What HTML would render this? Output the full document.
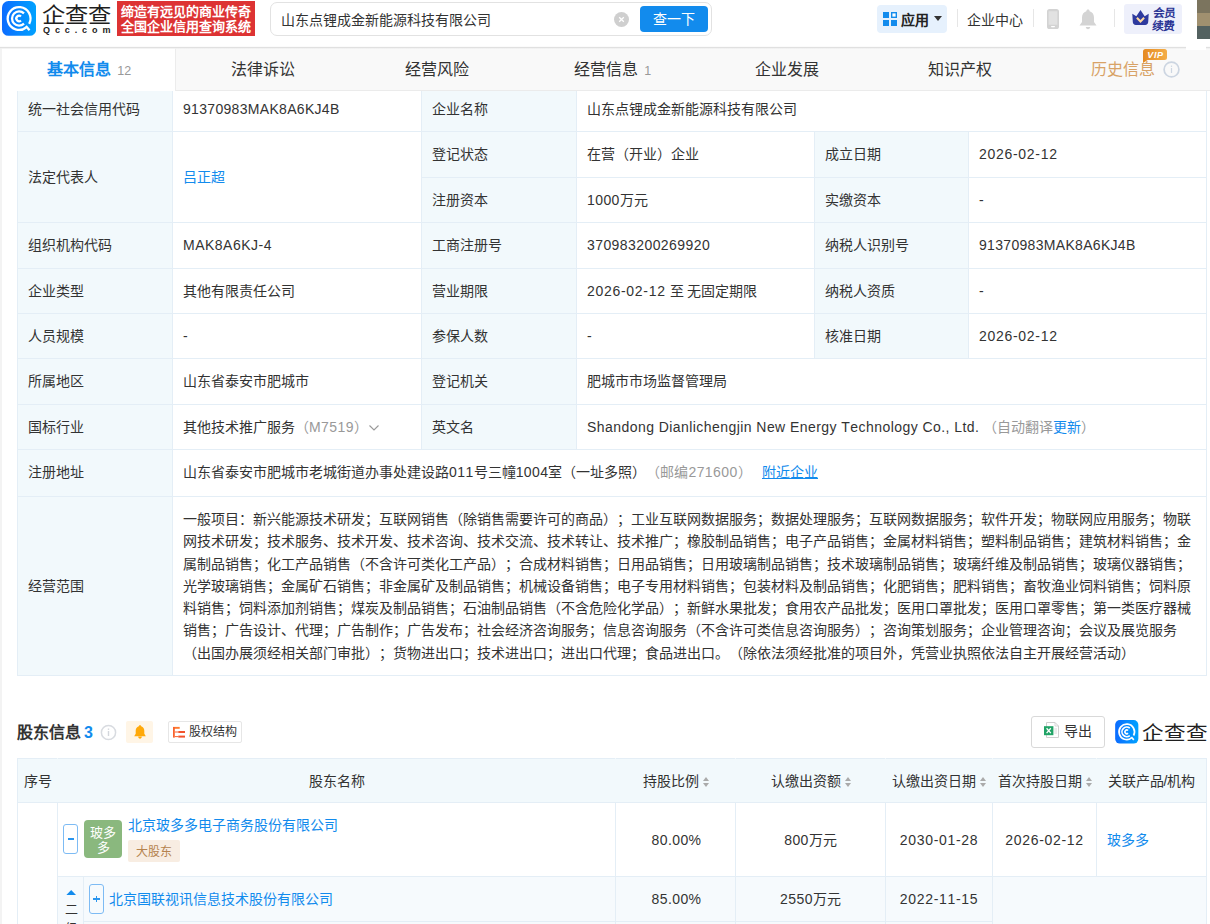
<!DOCTYPE html>
<html lang="zh-CN">
<head>
<meta charset="utf-8">
<title>企查查</title>
<style>
*{box-sizing:border-box;}
html,body{margin:0;padding:0;overflow:hidden;}
body{width:1210px;height:924px;overflow:hidden;position:relative;background:#fff;font-family:"Liberation Sans",sans-serif;font-size:14px;color:#333;text-spacing-trim:space-all;font-kerning:none;}
a{color:#128bed;text-decoration:none;}
.abs{position:absolute;}
/* header */
#hdr{position:absolute;left:0;top:0;width:1210px;height:47px;background:#fff;z-index:30;}
#hdrline{position:absolute;left:0;top:46px;width:1210px;height:3px;background:linear-gradient(#fbfbfb 0,#fbfbfb 33%,#e0e0e0 33%,#e0e0e0 67%,rgba(240,240,240,.8) 67%);z-index:31;}
#logoicon{position:absolute;left:2px;top:1px;width:34.2px;height:34.8px;}
#logotxt{position:absolute;left:42px;top:0px;transform:scaleY(.9);transform-origin:0 24px;font-size:23.3px;line-height:28px;color:#1f1f1f;font-weight:500;letter-spacing:0px;white-space:nowrap;}
#logosub{position:absolute;left:43px;top:24px;font-size:9px;line-height:12px;font-weight:bold;color:#222;letter-spacing:4.9px;white-space:nowrap;}
#slogan{position:absolute;left:117px;top:1px;width:138px;height:35px;background:#dd3333;color:#fff;font-weight:bold;font-size:13px;line-height:15px;padding:3px 0 0 3.7px;white-space:nowrap;letter-spacing:0;}
#search{position:absolute;left:270px;top:2px;width:442px;height:34px;border:1px solid #e2e2e2;border-radius:7px;background:#fff;}
#search .q{position:absolute;left:10px;top:0;line-height:34px;font-size:14px;color:#333;white-space:nowrap;}
#search .clr{position:absolute;left:343px;top:9px;width:15px;height:15px;border-radius:50%;background:#cfcfcf;}
#search .btn{position:absolute;left:369px;top:3px;width:68px;height:26px;border-radius:4px;background:#128bed;color:#fff;font-size:14px;line-height:26px;text-align:center;font-weight:500;}
#app{position:absolute;left:877px;top:5px;width:70px;height:28px;border-radius:4px;background:#e6f1fd;}
#app b{position:absolute;left:24px;top:1px;line-height:28px;font-size:14px;color:#222;}
.vdiv{position:absolute;top:9px;width:1px;height:18px;background:#e6e6e6;}
#ec{position:absolute;left:967px;top:6px;line-height:28px;font-size:14px;color:#333;white-space:nowrap;}
#vip{position:absolute;left:1124px;top:4px;width:58px;height:30px;border-radius:3px;background:#eef0fb;}
#vip .t{position:absolute;left:29px;top:2.5px;font-size:11.5px;line-height:12.5px;font-weight:bold;font-style:normal;transform:skewX(-4deg);color:#2b3595;white-space:nowrap;}
#avatar{position:absolute;left:1197px;top:0;width:13px;height:39px;background:linear-gradient(#7b745e 0,#7b745e 13px,#a0906f 13px,#a0906f 26px,#536160 26px,#536160 39px);}
/* tabs */
#tabs{position:absolute;left:0;top:48px;width:1210px;height:43px;background:#f9f9f9;border-bottom:1px solid #ebebeb;z-index:20;}
#tabs .tab{position:absolute;top:0;height:43px;width:174.4px;text-align:center;font-size:16px;line-height:44px;color:#333;white-space:nowrap;}
#tabs .tab small{font-size:12.5px;color:#999;margin-left:2px;}
#tabs .act{background:#fff;color:#128bed;font-weight:bold;height:43px;left:2px;width:174px;padding-left:1px;border-right:1px solid #ececec;}
#tabs .act small{font-weight:normal;}
#tabs .his{color:#d8a266;}
#lstrip{position:absolute;left:0;top:48px;width:2px;height:876px;background:#f3f3f3;z-index:25;}
</style>
</head>
<body>
<div id="hdr">
  <svg id="logoicon" viewBox="0 0 34.2 34.8">
    <defs><linearGradient id="lg" x1="0" y1="0.5" x2="1" y2="0.5"><stop offset="0" stop-color="#0c6cff"/><stop offset="1" stop-color="#00a2ff"/></linearGradient></defs>
    <rect x="0" y="0" width="34.2" height="34.8" rx="6.5" fill="url(#lg)"/>
    <g fill="none" stroke="#fff" stroke-width="2.3">
    <path d="M24.12 26.48 A11.4 11.4 0 1 1 27.17 22.85"/>
    <path d="M22.0 22.57 A7.05 7.05 0 1 1 22.0 12.43"/>
    <path d="M18.98 19.51 A2.75 2.75 0 1 1 18.98 15.49"/>
    <path d="M23.9 25.0 L27.5 29.3"/>
    </g>
  </svg>
  <div id="logotxt">企查查</div>
  <div id="logosub">Qcc.com</div>
  <div id="slogan">缔造有远见的商业传奇<br>全国企业信用查询系统</div>
  <div id="search">
    <div class="q">山东点锂成金新能源科技有限公司</div>
    <div class="clr"><svg width="15" height="15" viewBox="0 0 15 15"><path d="M5.2 5.2 L9.8 9.8 M9.8 5.2 L5.2 9.8" stroke="#fff" stroke-width="1.3"/></svg></div>
    <div class="btn">查一下</div>
  </div>
  <div id="app">
    <svg class="abs" style="left:6px;top:7px" width="14" height="14" viewBox="0 0 14 14"><rect x="0" y="0" width="6" height="6" fill="#128bed"/><rect x="8.7" y="0.7" width="4.6" height="4.6" fill="#fff" stroke="#128bed" stroke-width="1.4"/><rect x="0" y="8" width="6" height="6" fill="#128bed"/><rect x="8" y="8" width="6" height="6" fill="#128bed"/></svg>
    <b>应用</b>
    <svg class="abs" style="left:57px;top:11px" width="8" height="5" viewBox="0 0 8 5"><path d="M0 0 L8 0 L4 5 Z" fill="#333"/></svg>
  </div>
  <div class="vdiv" style="left:957px"></div>
  <div id="ec">企业中心</div>
  <div class="vdiv" style="left:1033px"></div>
  <svg class="abs" style="left:1047px;top:9px" width="12" height="20" viewBox="0 0 12 20"><rect x="0" y="0" width="12" height="20" rx="2.6" fill="#d3d3d3"/><rect x="1.6" y="2.2" width="8.8" height="13.6" rx="0.4" fill="#e2e2e2"/><rect x="4" y="16.9" width="4" height="1.3" rx="0.65" fill="#fff"/></svg>
  <svg class="abs" style="left:1079px;top:9px" width="18" height="21" viewBox="0 0 18 21"><path d="M9 0.5 C10 0.5 10.6 1.2 10.6 2.2 C13.6 3 15 5.6 15 8.6 L15 13 L17.5 16.5 L0.5 16.5 L3 13 L3 8.6 C3 5.6 4.4 3 7.4 2.2 C7.4 1.2 8 0.5 9 0.5 Z" fill="#d4d4d4"/><path d="M6.8 18 L11.2 18 C11.2 19.3 10.2 20.2 9 20.2 C7.8 20.2 6.8 19.3 6.8 18 Z" fill="#d4d4d4"/></svg>
  <div class="vdiv" style="left:1114px"></div>
  <div id="vip">
    <svg class="abs" style="left:8px;top:6px" width="17" height="16" viewBox="0 0 17 16"><path d="M0.3 3.8 L4.3 6.2 L8.5 0 L12.7 6.2 L16.7 3.8 L16.2 12 C16.1 13.8 15 14.9 13.2 14.9 L3.8 14.9 C2 14.9 0.9 13.8 0.8 12 Z" fill="#2e3a9e"/><path d="M4.9 7.7 L8.5 11.5 L12.1 7.7" fill="none" stroke="#ffd9a0" stroke-width="2"/></svg>
    <div class="t">会员<br>续费</div>
  </div>
  <div id="avatar"></div>
</div>
<div id="hdrline"></div>
<div class="abs" style="left:1186px;top:40px;width:20px;height:10px;background:#fff;z-index:32"></div>
<div id="tabs">
  <div class="tab act">基本信息 <small>12</small></div>
  <div class="tab" style="left:176px">法律诉讼</div>
  <div class="tab" style="left:350.3px">经营风险</div>
  <div class="tab" style="left:525.3px">经营信息 <small>1</small></div>
  <div class="tab" style="left:699.5px">企业发展</div>
  <div class="tab" style="left:873.3px">知识产权</div>
  <div class="tab his" style="left:1048px;text-align:left;padding-left:43px">历史信息
    <svg class="abs" style="left:115.3px;top:13.3px" width="17" height="17" viewBox="0 0 17 17"><circle cx="8.5" cy="8.5" r="7.4" fill="none" stroke="#ccd5e1" stroke-width="1.7"/><rect x="7.9" y="7" width="1.2" height="5" fill="#cdd6e2"/><rect x="7.9" y="4.6" width="1.2" height="1.3" fill="#cdd6e2"/></svg>
    <div class="abs" style="left:95px;top:1px;width:24px;height:11px;border-radius:2.5px 2.5px 2.5px 0;background:linear-gradient(90deg,#e58a22,#f4ad48);color:#fff;font-size:9px;line-height:12px;font-weight:bold;font-style:italic;text-align:center;letter-spacing:0.7px;padding-left:1px;">VIP</div><svg class="abs" style="left:95px;top:11.5px" width="5" height="3" viewBox="0 0 5 3"><path d="M0 0 H4.5 L0 3 Z" fill="#e58a22"/></svg>
  </div>
</div>
<div id="lstrip"></div>
<style>
#t1{position:absolute;left:17px;top:86px;width:1189px;border-collapse:collapse;table-layout:fixed;z-index:5;}
#t1 td{border:1px solid #e4eef6;padding:0 10px;font-size:14px;line-height:22px;color:#333;vertical-align:middle;white-space:nowrap;overflow:hidden;}
#t1 td.tb{background:#f2f9fc;}
#t1 tr.s td{vertical-align:top;padding-top:11px;}
#t1 tr.s td.m{vertical-align:middle;padding-top:0;}
.d{letter-spacing:.42px;}
.dt{letter-spacing:.7px;}
.en{letter-spacing:.44px;}
.c1{letter-spacing:.31px;}
.c2{letter-spacing:.5px;}
#t1 .g{color:#999;}
#scope{line-height:22.33px;position:relative;top:0px;}
#sec{position:absolute;left:17px;top:722px;height:22px;z-index:5;}
#sec .h{position:absolute;left:0;top:0;font-size:16px;line-height:22px;font-weight:bold;color:#333;white-space:nowrap;}
#sec .n{position:absolute;left:67px;top:0;font-size:16px;line-height:22px;font-weight:bold;color:#128bed;}
#bellbox{position:absolute;left:126px;top:721px;width:27px;height:22px;border-radius:2px;background:#fff5e6;}
#gqbtn{position:absolute;left:168px;top:721px;width:74px;height:22px;border:1px solid #e6e6e6;border-radius:2px;background:#fff;}
#gqbtn span{position:absolute;left:19.5px;top:0;line-height:20px;font-size:12px;color:#333;white-space:nowrap;}
#expbtn{position:absolute;left:1031px;top:716px;width:74px;height:32px;border:1px solid #d9d9d9;border-radius:3px;background:#fff;}
#expbtn span{position:absolute;left:32px;top:0;line-height:29px;font-size:14px;color:#333;white-space:nowrap;}
#wm{position:absolute;left:1115px;top:719px;width:95px;height:25px;}
#t2{position:absolute;left:17px;top:758px;width:1189px;border-collapse:collapse;table-layout:fixed;z-index:5;}
#t2 td,#t2 th{border:1px solid #e4eef6;padding:0;font-size:14px;line-height:22px;color:#333;vertical-align:middle;text-align:center;font-weight:normal;white-space:nowrap;overflow:hidden;position:relative;}
#t2 th{background:#f2f9fc;border-left-color:#f2f9fc;border-right-color:#f2f9fc;}
#t2 th:first-child{border-left-color:#e4eef6;}
#t2 th:last-child{border-right-color:#e4eef6;}
#t2 tr.sub td{background:#f6fafd;}
.sort{display:inline-block;width:6px;height:10px;margin-left:4px;vertical-align:-1px;}
</style>
<table id="t1">
<colgroup><col style="width:155px"><col style="width:249px"><col style="width:155px"><col style="width:238px"><col style="width:154px"><col style="width:238px"></colgroup>
<tr class="s" style="height:45px"><td class="tb">统一社会信用代码</td><td class="c1">91370983MAK8A6KJ4B</td><td class="tb">企业名称</td><td colspan="3">山东点锂成金新能源科技有限公司</td></tr>
<tr class="s" style="height:46px"><td class="tb m" rowspan="2">法定代表人</td><td class="m" rowspan="2"><a>吕正超</a></td><td class="tb">登记状态</td><td>在营（开业）企业</td><td class="tb">成立日期</td><td class="dt">2026-02-12</td></tr>
<tr class="s" style="height:45px"><td class="tb">注册资本</td><td><span class="d">1000</span>万元</td><td class="tb">实缴资本</td><td>-</td></tr>
<tr class="s" style="height:46px"><td class="tb">组织机构代码</td><td class="c2">MAK8A6KJ-4</td><td class="tb">工商注册号</td><td class="d">370983200269920</td><td class="tb">纳税人识别号</td><td class="c1">91370983MAK8A6KJ4B</td></tr>
<tr class="s" style="height:45px"><td class="tb">企业类型</td><td>其他有限责任公司</td><td class="tb">营业期限</td><td><span class="dt">2026-02-12</span> 至 无固定期限</td><td class="tb">纳税人资质</td><td>-</td></tr>
<tr class="s" style="height:45px"><td class="tb">人员规模</td><td>-</td><td class="tb">参保人数</td><td>-</td><td class="tb">核准日期</td><td class="dt">2026-02-12</td></tr>
<tr class="s" style="height:46px"><td class="tb">所属地区</td><td>山东省泰安市肥城市</td><td class="tb">登记机关</td><td colspan="3">肥城市市场监督管理局</td></tr>
<tr class="s" style="height:45px"><td class="tb">国标行业</td><td>其他技术推广服务<span class="g">（<span class="d">M7519</span>）</span><svg width="10" height="6" viewBox="0 0 10 6" style="margin-left:1px;vertical-align:1px"><path d="M0.5 0.5 L5 5 L9.5 0.5" fill="none" stroke="#999" stroke-width="1.1"/></svg></td><td class="tb">英文名</td><td colspan="3"><span id="en" class="en">Shandong Dianlichengjin New Energy Technology Co., Ltd.</span> <span class="g">（自动翻译<a>更新</a>）</span></td></tr>
<tr class="s" style="height:47px"><td class="tb">注册地址</td><td colspan="5">山东省泰安市肥城市老城街道办事处建设路<span class="d">011</span>号三幢<span class="d">1004</span>室（一址多照）<span class="g">（邮编<span class="d">271600</span>）</span><a style="margin-left:10.3px;text-decoration:underline">附近企业</a></td></tr>
<tr style="height:179px"><td class="tb">经营范围</td><td colspan="5"><div id="scope">一般项目：新兴能源技术研发；互联网销售（除销售需要许可的商品）；工业互联网数据服务；数据处理服务；互联网数据服务；软件开发；物联网应用服务；物联<br>网技术研发；技术服务、技术开发、技术咨询、技术交流、技术转让、技术推广；橡胶制品销售；电子产品销售；金属材料销售；塑料制品销售；建筑材料销售；金<br>属制品销售；化工产品销售（不含许可类化工产品）；合成材料销售；日用品销售；日用玻璃制品销售；技术玻璃制品销售；玻璃纤维及制品销售；玻璃仪器销售；<br>光学玻璃销售；金属矿石销售；非金属矿及制品销售；机械设备销售；电子专用材料销售；包装材料及制品销售；化肥销售；肥料销售；畜牧渔业饲料销售；饲料原<br>料销售；饲料添加剂销售；煤炭及制品销售；石油制品销售（不含危险化学品）；新鲜水果批发；食用农产品批发；医用口罩批发；医用口罩零售；第一类医疗器械<br>销售；广告设计、代理；广告制作；广告发布；社会经济咨询服务；信息咨询服务（不含许可类信息咨询服务）；咨询策划服务；企业管理咨询；会议及展览服务<br>（出国办展须经相关部门审批）；货物进出口；技术进出口；进出口代理；食品进出口。（除依法须经批准的项目外，凭营业执照依法自主开展经营活动）</div></td></tr>
</table>

<div id="sec"><div class="h">股东信息</div><div class="n">3</div></div>
<svg class="abs" style="left:100.4px;top:724.4px;z-index:5" width="17" height="17" viewBox="0 0 17 17"><circle cx="8.5" cy="8.5" r="7.1" fill="none" stroke="#d8dbe0" stroke-width="1.5"/><rect x="7.8" y="7" width="1.4" height="5" fill="#d3d6dc"/><rect x="7.8" y="4.5" width="1.4" height="1.4" fill="#d3d6dc"/></svg>
<div id="bellbox"><svg class="abs" style="left:7.7px;top:3.8px" width="12" height="14" viewBox="0 0 12 14"><path d="M6 0.2 C6.8 0.2 7.2 0.7 7.2 1.3 C9.3 1.9 10.3 3.7 10.3 5.7 L10.3 8.8 L11.8 11.2 L0.2 11.2 L1.7 8.8 L1.7 5.7 C1.7 3.7 2.7 1.9 4.8 1.3 C4.8 0.7 5.2 0.2 6 0.2 Z" fill="#ffa90a"/><path d="M4.2 11.6 L7.8 11.6 C7.8 12.9 6.9 13.7 6 13.7 C5.1 13.7 4.2 12.9 4.2 11.6 Z" fill="#ffa90a"/></svg></div>
<div id="gqbtn"><svg class="abs" style="left:4px;top:4px" width="13" height="13" viewBox="0 0 13 13"><rect x="0" y="0.9" width="6.7" height="1.9" fill="#ff7a2e"/><rect x="0" y="1" width="1.8" height="10.6" fill="#f9632e"/><rect x="1.8" y="5.5" width="3.6" height="1" fill="#f9632e"/><rect x="1.8" y="10.1" width="3.6" height="1" fill="#f9632e"/><rect x="5.3" y="5" width="6.7" height="2" fill="#f2542d"/><rect x="5.3" y="9.6" width="6.7" height="2" fill="#f2542d"/></svg><span>股权结构</span></div>
<div id="expbtn"><svg class="abs" style="left:12px;top:5px" width="15" height="16" viewBox="0 0 15 16"><path d="M2.5 0.5 H11 L14.5 4 V15.5 H2.5 Z" fill="#fff" stroke="#cfcfcf" stroke-width="1"/><path d="M11 0.5 V4 H14.5" fill="none" stroke="#cfcfcf" stroke-width="0.8"/><path d="M10.3 7 H13 M10.3 9 H13 M10.3 11 H13" stroke="#cfcfcf" stroke-width="0.8"/><rect x="0" y="4.2" width="9.4" height="9" fill="#21a366"/><path d="M2.6 6.3 L6.8 11.1 M6.8 6.3 L2.6 11.1" stroke="#fff" stroke-width="1.3"/></svg><span>导出</span></div>
<div id="wm">
  <svg class="abs" style="left:0;top:1px" width="23.5" height="23.6" viewBox="0 0 34.2 34.8"><rect x="0" y="0" width="34.2" height="34.8" rx="7" fill="url(#lg)"/><g fill="none" stroke="#fff" stroke-width="2.5"><path d="M24.12 26.48 A11.4 11.4 0 1 1 27.17 22.85"/><path d="M21.63 22.9 A7.05 7.05 0 1 1 21.63 12.1"/><path d="M18.98 19.51 A2.75 2.75 0 1 1 18.98 15.49"/><path d="M23.9 25.0 L27.5 29.3"/></g></svg>
  <div class="abs" style="left:27px;top:0px;font-size:21.6px;line-height:28px;color:#1f1f1f;font-weight:500;white-space:nowrap;transform:scaleY(.9);transform-origin:0 24px;">企查查</div>
</div>

<table id="t2">
<colgroup><col style="width:40px"><col style="width:26px"><col style="width:532px"><col style="width:120px"><col style="width:150px"><col style="width:107px"><col style="width:104px"><col style="width:110px"></colgroup>
<tr style="height:44px"><th style="text-align:left;padding-left:6px">序号</th><th colspan="2">股东名称</th><th>持股比例<svg class="sort" viewBox="0 0 6 10"><path d="M3 0 L6 4 H0 Z M3 10 L6 6 H0 Z" fill="#aaa"/></svg></th><th>认缴出资额<svg class="sort" viewBox="0 0 6 10"><path d="M3 0 L6 4 H0 Z M3 10 L6 6 H0 Z" fill="#aaa"/></svg></th><th>认缴出资日期<svg class="sort" viewBox="0 0 6 10"><path d="M3 0 L6 4 H0 Z M3 10 L6 6 H0 Z" fill="#aaa"/></svg></th><th>首次持股日期<svg class="sort" viewBox="0 0 6 10"><path d="M3 0 L6 4 H0 Z M3 10 L6 6 H0 Z" fill="#aaa"/></svg></th><th>关联产品/机构</th></tr>
<tr style="height:74px"><td rowspan="3"></td><td colspan="2" style="text-align:left">
  <div class="abs" style="left:5px;top:21px;width:15px;height:30px;border:1px solid #7dbbf4;border-radius:3px;background:#fff;"><div class="abs" style="left:3.5px;top:13.3px;width:6px;height:1.6px;background:#2a95ee"></div></div>
  <div class="abs" style="left:26px;top:17px;width:38px;height:38px;border-radius:4px;background:#8ab87e;color:#fff;font-size:13px;line-height:15px;text-align:center;padding-top:5px;">玻多<br>多</div>
  <a class="abs" style="left:70px;top:11px;line-height:22px;">北京玻多多电子商务股份有限公司</a>
  <div class="abs" style="left:70px;top:37px;width:52px;height:22px;border-radius:2px;background:#f8ede2;color:#b5834e;font-size:12px;line-height:24px;text-align:center;">大股东</div>
</td><td class="d" style="padding-left:2px">80.00%</td><td><span class="d">800</span>万元</td><td class="dt">2030-01-28</td><td class="dt">2026-02-12</td><td style="text-align:left;padding-left:10px"><a>玻多多</a></td></tr>
<tr class="sub" style="height:45px"><td rowspan="2" style="vertical-align:top">
  <svg class="abs" style="left:7.6px;top:13px" width="10.4" height="5.4" viewBox="0 0 10.4 5.4"><path d="M0 5.4 L5.2 0 L10.4 5.4 Z" fill="#128bed"/></svg>
  <div class="abs" style="left:6.5px;top:22.5px;font-size:13px;line-height:19px;width:13px;white-space:normal;">二级</div>
</td><td style="text-align:left">
  <div class="abs" style="left:5px;top:7px;width:15px;height:30px;border:1px solid #7dbbf4;border-radius:3px;"><div class="abs" style="left:3.2px;top:13.3px;width:6.6px;height:1.5px;background:#2a95ee"></div><div class="abs" style="left:5.75px;top:10.7px;width:1.5px;height:6.6px;background:#2a95ee"></div></div>
  <a class="abs" style="left:25px;top:11px;line-height:22px;">北京国联视讯信息技术股份有限公司</a>
</td><td class="d" style="padding-left:2px">85.00%</td><td><span class="d">2550</span>万元</td><td class="dt">2022-11-15</td><td colspan="2" rowspan="2"></td></tr>
<tr class="sub" style="height:45px"><td></td><td></td><td></td><td></td></tr>
</table>

<!--MAINEND-->
</body>
</html>
